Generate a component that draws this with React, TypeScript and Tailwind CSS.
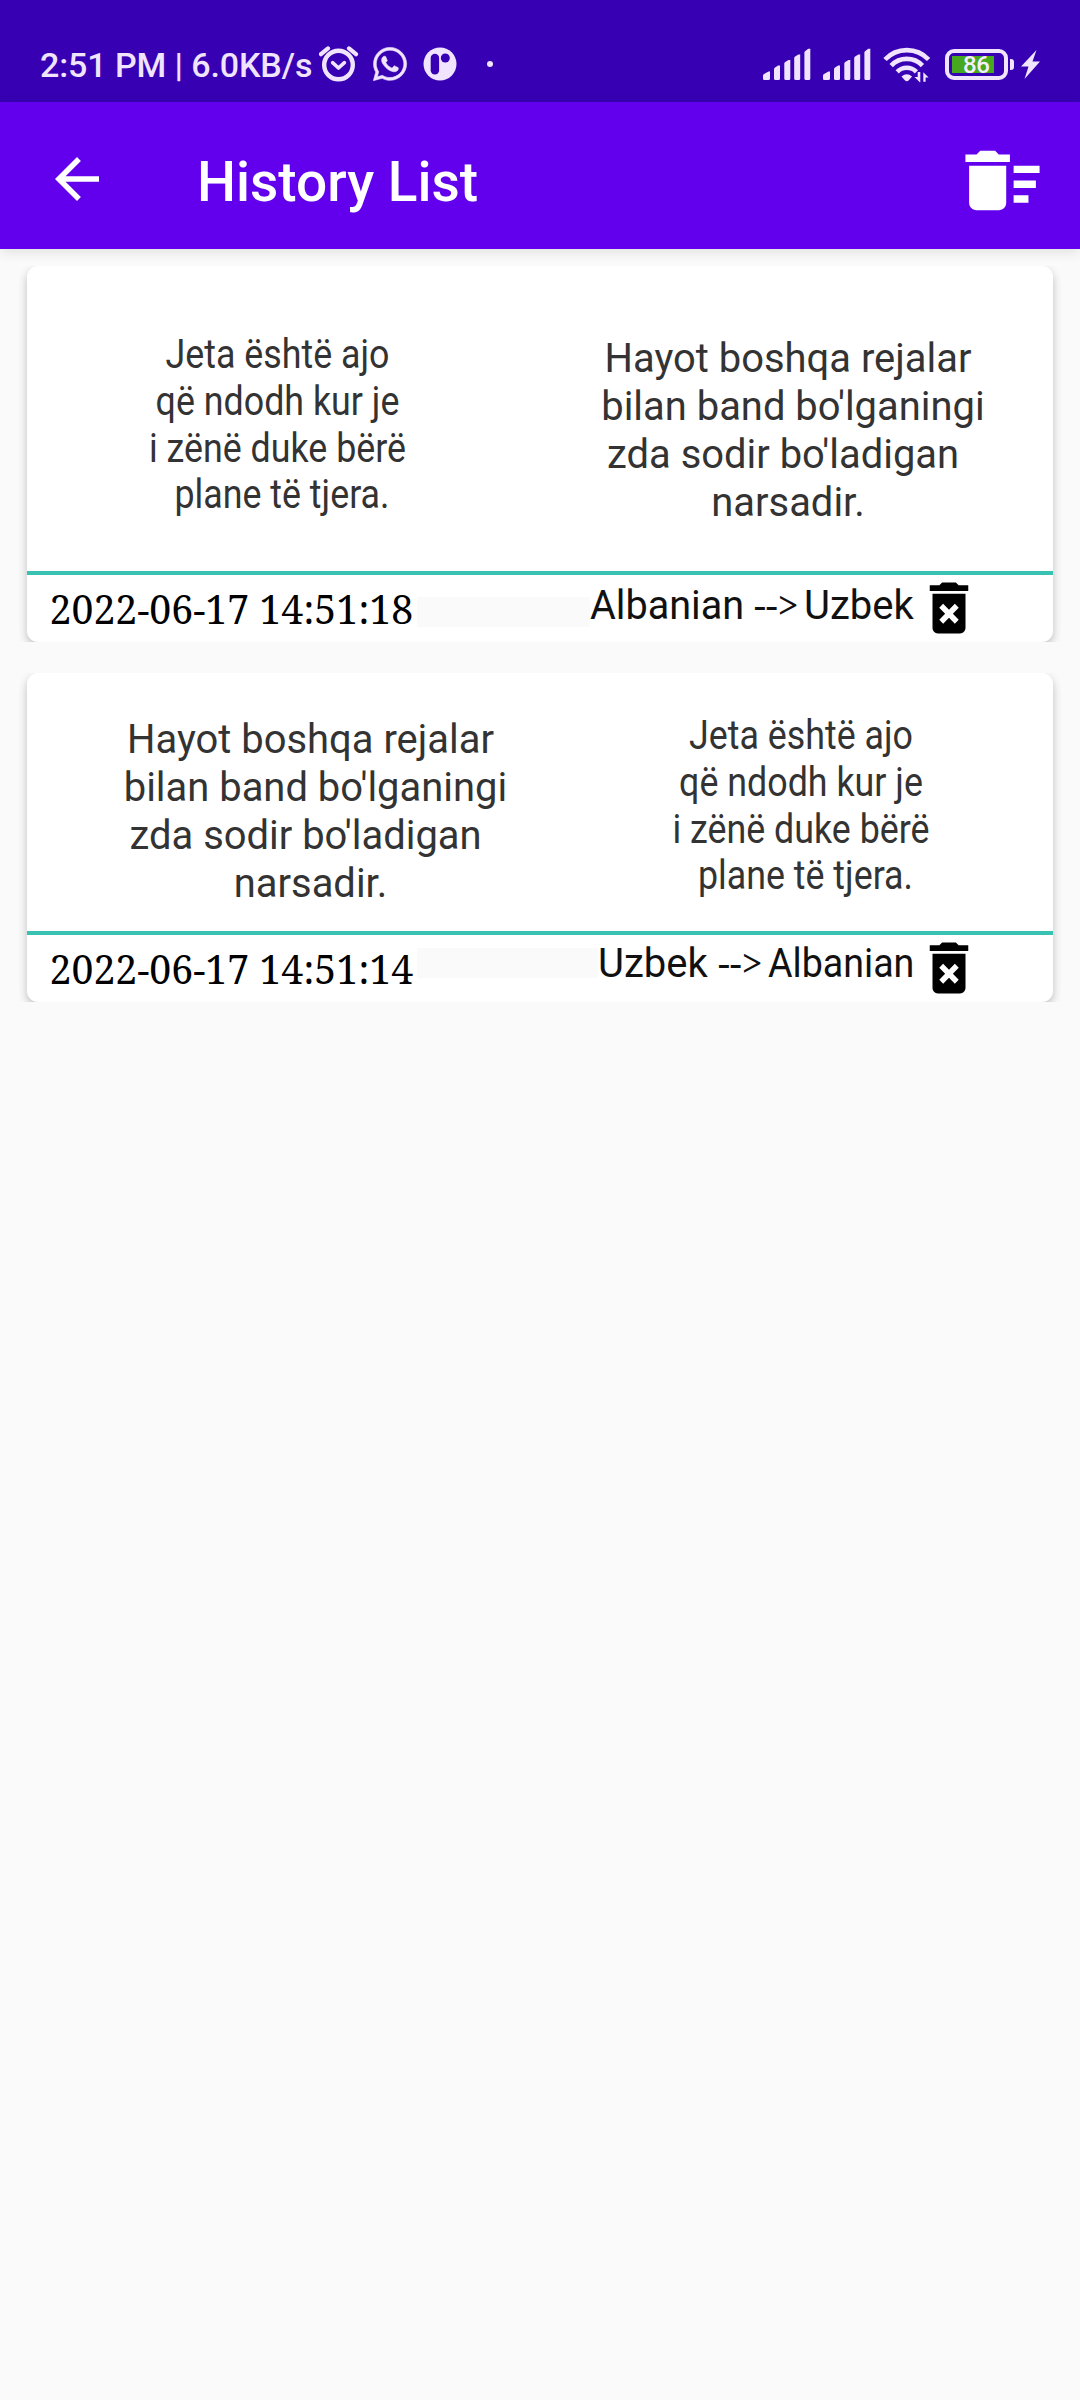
import React, { FC } from "react";
import { FaWhatsapp } from "react-icons/fa";

interface Phrase {
  lines: string[];
  column: string;
  text: string;
}

interface HistoryItem {
  date: string;
  source: Phrase;
  target: Phrase;
  from: string;
  to: string;
  fromClass: string;
  toClass: string;
  arrowClass: string;
  cardClass: string;
  bodyClass: string;
  pairClass: string;
  fillerClass: string;
}

const ALBANIAN = ["Jeta është ajo", "që ndodh kur je", "i zënë duke bërë", " plane të tjera."];
const UZBEK = ["Hayot boshqa rejalar", " bilan band bo'lganingi", "zda sodir bo'ladigan ", "narsadir."];

const albanianText = "scale-x-[0.895] text-[40px] leading-[46.8px]";
const uzbekText = "scale-x-[0.974] text-[41px] leading-[48px]";

const items: HistoryItem[] = [
  {
    date: "2022-06-17 14:51:18",
    source: { lines: ALBANIAN, column: "w-[501px] pt-[66px]", text: albanianText },
    target: { lines: UZBEK, column: "w-[520px] pt-[68px]", text: uzbekText },
    from: "Albanian",
    to: "Uzbek",
    fromClass: "w-[164px] scale-x-[0.99]",
    toClass: "w-[112px]",
    arrowClass: "w-[50px]",
    cardClass: "h-[376px]",
    bodyClass: "h-[305px]",
    pairClass: "mt-[5px]",
    fillerClass: "mt-[22px]",
  },
  {
    date: "2022-06-17 14:51:14",
    source: { lines: UZBEK, column: "w-[567px] pt-[42px]", text: uzbekText },
    target: { lines: ALBANIAN, column: "w-[414px] pt-[40px]", text: albanianText },
    from: "Uzbek",
    to: "Albanian",
    fromClass: "w-[120px]",
    toClass: "w-[148px] scale-x-[0.94]",
    arrowClass: "w-[50px]",
    cardClass: "h-[329px]",
    bodyClass: "h-[258px]",
    pairClass: "mt-[3px]",
    fillerClass: "mt-[13px]",
  },
];

const SignalIcon: FC = () => (
  <svg className="h-8 w-12" viewBox="0 0 48 32" fill="currentColor">
    <path d="M0 31v-3.500q0-1 1-1.500l4.500-2.400h1.500v6.900q0 1.500-1.500 1.500h-4q-1.500 0-1.500-1z" />
    <path d="M11 21.500q0-1.200 1-1.900l3.200-2h1.800v12.900q0 1.500-1.500 1.500h-3q-1.500 0-1.500-1.500z" />
    <path d="M21.300 15.500q0-1 .9-1.600l3.300-2h1.800v18.600q0 1.500-1.500 1.500h-3q-1.500 0-1.500-1.500z" />
    <path d="M31.200 10q0-1 .9-1.600l3.300-2h1.800v24.100q0 1.500-1.500 1.500h-3q-1.500 0-1.500-1.500z" />
    <path d="M41.400 4.600q0-1 .9-1.700l3-2.100h2v29.700q0 1.500-1.500 1.500h-2.900q-1.500 0-1.500-1.500z" />
  </svg>
);

const StatusBar: FC = () => (
  <div className="flex h-[102px] items-start bg-[#3700b3] text-[#f0e4ff]">
    <span className="ml-10 mt-[45px] w-[279px] whitespace-pre text-[34px] font-medium leading-10 tracking-[-0.1px]">
      2:51 PM | 6.0KB/s
    </span>

    {/* alarm */}
    <svg className="mt-11 h-10 w-10" viewBox="0 0 40 40" fill="none" stroke="currentColor" strokeLinecap="round">
      <circle cx="19.500" cy="21" r="14.300" strokeWidth="4.400" />
      <path d="M2 10.200L9 4.400M37 10.200L30 4.400" strokeWidth="4.200" />
      <path d="M13.600 18.600l5.900 5.400 5.900-5.400" strokeWidth="3.600" strokeLinejoin="round" />
    </svg>

    <FaWhatsapp className="ml-[12px] mt-[45px] h-[38px] w-[38px] stroke-current stroke-[8]" />

    {/* notification from the translator app */}
    <svg className="ml-[14px] mt-[47px] h-[34px] w-[34px]" viewBox="0 0 34 34">
      <circle cx="17" cy="17" r="16.500" fill="currentColor" />
      <rect x="7.700" y="6.800" width="8.400" height="20.800" rx="4.200" fill="#3700b3" />
      <circle cx="22.300" cy="11" r="4.500" fill="#3700b3" />
    </svg>

    <span className="ml-[30px] mt-[61px] h-1.5 w-1.5 rounded-full bg-current" />

    <div className="ml-auto mr-10 flex items-start">
      <div className="mt-12 flex gap-3">
        <SignalIcon />
        <SignalIcon />
      </div>

      <svg className="ml-3 mt-[46px] h-10 w-12" viewBox="0 0 48 40">
        <g fill="none" stroke="currentColor" strokeWidth="4.600">
          <path d="M2 13.500a30 30 0 0 1 43.600 0" />
          <path d="M8.200 19.600a21.500 21.500 0 0 1 31.200 0" />
          <path d="M14.200 25.800a13.500 13.500 0 0 1 19.200 0" />
        </g>
        <path d="M18.500 30.500q5.300-4.600 10.600 0l-3.300 3.800q-2 1.700-4 0z" fill="currentColor" />
        <path d="M32.500 32.500l5.500-1.200v5.200h-2.500zM38 25.500v11M41.500 26.500v11l6-7.500h-3v-3.500z" fill="#3700b3" stroke="#3700b3" strokeWidth="3" />
        <path d="M36.800 36.300l-5.300-5.300h3.200v-5h2.600v10.300zM40.300 26.300l5.300 5.200h-3v4.300h-2.300z" fill="currentColor" />
      </svg>

      {/* battery */}
      <div className="ml-[14px] mt-[29px] flex items-center pt-5">
        <div className="flex h-[31px] w-[63px] rounded-[9px] border-4 border-current p-[3px]">
          <div className="relative h-[17px] w-[42px] bg-[#46a81e]">
            <span className="absolute left-[11px] top-[-4px] text-[24px] font-medium leading-[27px] tracking-[-0.5px] text-[#f4eeff]">
              86
            </span>
          </div>
        </div>
        <span className="ml-[2px] h-[11px] w-1 rounded-r-[3px] bg-current" />
      </div>

      <svg className="ml-[7px] mt-[50px] h-[29px] w-[19px]" viewBox="0 0 19 29" fill="currentColor">
        <path d="M15.500 0L0 16.500h7.500L3.500 29 19 11.500h-7.500z" />
      </svg>
    </div>
  </div>
);

const AppBar: FC = () => (
  <div className="relative flex h-[147px] items-start bg-[#6200ee] text-white shadow-[0_3px_12px_rgba(0,0,0,0.11)]">
    <button className="ml-11 mt-11">
      <svg className="h-[66px] w-[66px]" viewBox="0 0 24 24" fill="currentColor">
        <path d="M20 11H7.830l5.590-5.590L12 4l-8 8 8 8 1.410-1.410L7.830 13H20v-2z" />
      </svg>
    </button>
    <h1 className="ml-[87px] mt-12 text-[55px] font-medium leading-[64px]">History List</h1>
    <button className="ml-auto mr-[33px] mt-[34px]">
      <svg className="h-[89px] w-[89px]" viewBox="0 0 24 24" fill="currentColor">
        <path d="M15 16h4v2h-4zm0-8h7v2h-7zm0 4h6v2h-6zM3 18c0 1.100.9 2 2 2h6c1.100 0 2-.9 2-2V8H3v10zM14 5h-3l-1-1H6L5 5H2v2h12z" />
      </svg>
    </button>
  </div>
);

const PhraseColumn: FC<{ phrase: Phrase }> = ({ phrase }) => (
  <div className={`shrink-0 text-center text-[#333] ${phrase.column}`}>
    {phrase.lines.map((line) => (
      <p key={line} className={`whitespace-pre ${phrase.text}`}>
        {line}
      </p>
    ))}
  </div>
);

const HistoryCard: FC<{ item: HistoryItem }> = ({ item }) => (
  <div className="overflow-hidden px-2">
    <div className={`rounded-[11px] bg-white shadow-[0_4px_10px_rgba(0,0,0,0.24)] ${item.cardClass}`}>
      <div className={`flex items-start ${item.bodyClass}`}>
        <PhraseColumn phrase={item.source} />
        <PhraseColumn phrase={item.target} />
      </div>

      <div className="h-1 bg-[#37c2b2]" />

      <div className="flex items-start pr-[71px] text-black">
        <span className="ml-[22.600px] mt-2 font-['Noto_Serif',serif] text-[39.200px] leading-[52px]">
          {item.date}
        </span>
        <div className={`ml-1 h-[30px] flex-1 bg-[#fafafa] ${item.fillerClass}`} />
        <div className={`flex items-baseline text-[40px] leading-[48px] text-[#111] ${item.pairClass}`}>
          <span className={`origin-left ${item.fromClass}`}>{item.from}</span>
          <span className={`font-['Noto_Serif',serif] text-[38px] ${item.arrowClass}`}>--&gt;</span>
          <span className={`origin-left ${item.toClass}`}>{item.to}</span>
        </div>
        <button className="-mt-px">
          <svg className="h-[68px] w-[66px]" viewBox="0 0 24 24" preserveAspectRatio="none">
            <path d="M6 19c0 1.100.9 2 2 2h8c1.100 0 2-.9 2-2V7H6v12zm2.460-7.120l1.410-1.410L12 12.590l2.120-2.120 1.410 1.410L13.410 14l2.120 2.120-1.410 1.410L12 15.410l-2.120 2.120-1.410-1.410L10.590 14l-2.130-2.120zM15.500 4l-1-1h-5l-1 1H5v2h14V4z" />
          </svg>
        </button>
      </div>
    </div>
  </div>
);

const App: FC = () => {
  return (
    <div className="min-h-[2400px] w-[1080px] bg-[#fafafa] font-['Roboto',sans-serif]">
      <StatusBar />
      <AppBar />
      <div className="mx-[19px] mt-[17px] flex flex-col gap-[31px]">
        {items.map((item) => (
          <HistoryCard key={item.date} item={item} />
        ))}
      </div>
    </div>
  );
};

export default App;
